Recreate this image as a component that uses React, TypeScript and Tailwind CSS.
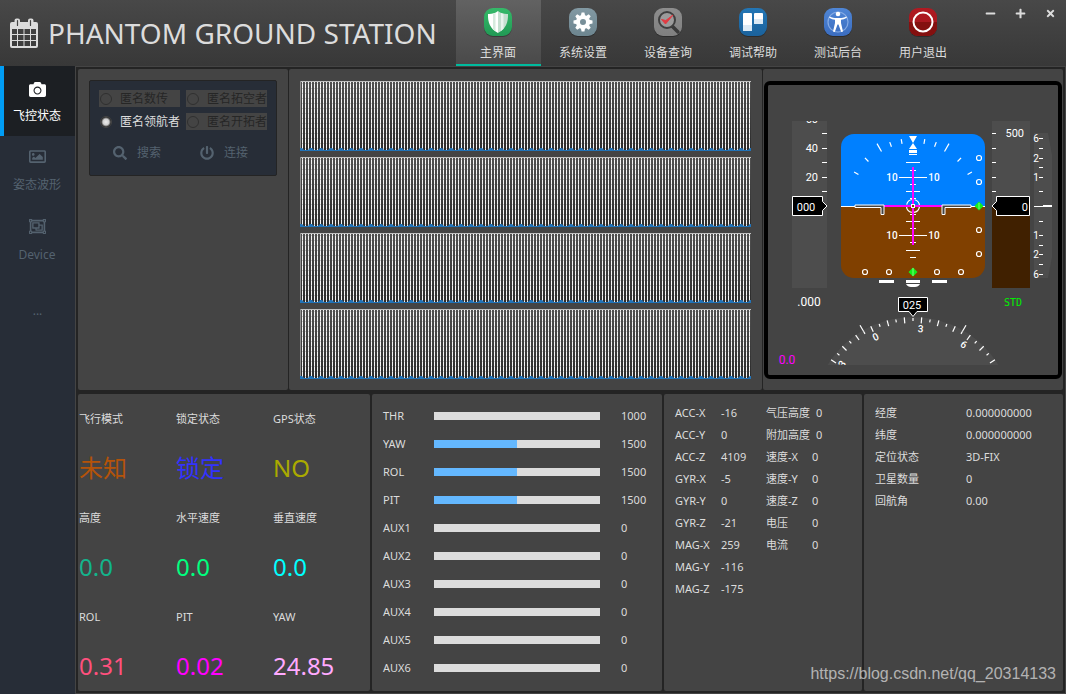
import { useState } from "react";
import type { ReactNode } from "react";
import {
  FaCamera,
  FaMinus,
  FaPlus,
  FaPowerOff,
  FaRegImage,
  FaRegObjectGroup,
  FaSearch,
  FaTimes,
} from "react-icons/fa";

const PANEL = "rounded-xs bg-[#444444]";

const RADIOS = [
  { id: "data", label: "匿名数传", disabled: true },
  { id: "sky", label: "匿名拓空者", disabled: true },
  { id: "navigator", label: "匿名领航者", disabled: false },
  { id: "pioneer", label: "匿名开拓者", disabled: true },
];

const STATUS_ROWS = [
  [
    { label: "飞行模式", value: "未知", color: "text-[#b45309]" },
    { label: "锁定状态", value: "锁定", color: "text-[#3232ff]" },
    { label: "GPS状态", value: "NO", color: "text-[#aaaa00]" },
  ],
  [
    { label: "高度", value: "0.0", color: "text-[#14b48c]" },
    { label: "水平速度", value: "0.0", color: "text-[#00ff7f]" },
    { label: "垂直速度", value: "0.0", color: "text-[#00ffff]" },
  ],
  [
    { label: "ROL", value: "0.31", color: "text-[#ff507d]" },
    { label: "PIT", value: "0.02", color: "text-[#ff00ff]" },
    { label: "YAW", value: "24.85", color: "text-[#ffaaff]" },
  ],
];

const CHANNELS = [
  { name: "THR", value: 1000 },
  { name: "YAW", value: 1500 },
  { name: "ROL", value: 1500 },
  { name: "PIT", value: 1500 },
  { name: "AUX1", value: 0 },
  { name: "AUX2", value: 0 },
  { name: "AUX3", value: 0 },
  { name: "AUX4", value: 0 },
  { name: "AUX5", value: 0 },
  { name: "AUX6", value: 0 },
];

const IMU = [
  ["ACC-X", "-16"],
  ["ACC-Y", "0"],
  ["ACC-Z", "4109"],
  ["GYR-X", "-5"],
  ["GYR-Y", "0"],
  ["GYR-Z", "-21"],
  ["MAG-X", "259"],
  ["MAG-Y", "-116"],
  ["MAG-Z", "-175"],
];

const EXTRA = [
  ["气压高度", "0"],
  ["附加高度", "0"],
  ["速度-X", "0"],
  ["速度-Y", "0"],
  ["速度-Z", "0"],
  ["电压", "0"],
  ["电流", "0"],
];

const GPS = [
  ["经度", "0.000000000"],
  ["纬度", "0.000000000"],
  ["定位状态", "3D-FIX"],
  ["卫星数量", "0"],
  ["回航角", "0.00"],
];

function CalendarIcon() {
  return (
    <svg className="h-[30px] w-7" viewBox="0 0 28 30" fill="none" aria-hidden>
      <path
        fill="#dcdcdc"
        fillRule="evenodd"
        d="M2 4h2.500V2.500a2 2 0 0 1 2-2h1.500a2 2 0 0 1 2 2V4h8V2.500a2 2 0 0 1 2-2h1.500a2 2 0 0 1 2 2V4H26a2 2 0 0 1 2 2v22a2 2 0 0 1-2 2H2a2 2 0 0 1-2-2V6a2 2 0 0 1 2-2zM2 11v5h5v-5zm6 0v5h5.500v-5zm6.500 0v5H20v-5zm6.500 0v5h5v-5zM2 17v5h5v-5zm6 0v5h5.500v-5zm6.500 0v5H20v-5zm6.500 0v5h5v-5zM2 23v5h5v-5zm6 0v5h5.500v-5zm6.500 0v5H20v-5zm6.500 0v5h5v-5z"
      />
      <path d="M7.500 2.500v5M20.500 2.500v5" stroke="#444444" strokeWidth="1.200" strokeLinecap="round" />
    </svg>
  );
}

function AppIcon({ id, from, to, children }: { id: string; from: string; to: string; children: ReactNode }) {
  return (
    <svg className="h-[30px] w-[30px]" viewBox="0 0 30 30" fill="none" aria-hidden>
      <defs>
        <linearGradient id={id} x1="0" y1="0" x2="0" y2="1">
          <stop offset="0" stopColor={from} />
          <stop offset="1" stopColor={to} />
        </linearGradient>
      </defs>
      <rect x="1" y="2" width="28" height="28" rx="9" fill="#000000" opacity="0.300" />
      <rect x="1" y="1" width="28" height="28" rx="9" fill={`url(#${id})`} />
      {children}
    </svg>
  );
}

const NAV_ITEMS = [
  {
    label: "主界面",
    icon: (
      <AppIcon id="nav-home" from="#35b969" to="#219a55">
        <path d="M15 4c3 2.500 6.500 3.200 10 3 .3 8-2 15-10 19z" fill="#c5dfd0" />
        <path d="M15 4C12 6.500 8.500 7.200 5 7c-.3 8 2 15 10 19z" fill="#ffffff" />
        <path d="M10 7v15l2.500 2.300V5.900z" fill="#d6eade" />
        <path d="M18 5.900v18.200l2.500-2.300V7z" fill="#e7f3ec" />
      </AppIcon>
    ),
  },
  {
    label: "系统设置",
    icon: (
      <AppIcon id="nav-settings" from="#8299a3" to="#6d858f">
        <g fill="#ffffff">
          {[0, 45, 90, 135, 180, 225, 270, 315].map((a) => (
            <path key={a} d="M12.800 9l.8-3.500h2.800l.8 3.500z" transform={`rotate(${a} 15 15)`} />
          ))}
        </g>
        <circle cx="15" cy="15" r="5" stroke="#ffffff" strokeWidth="4" />
      </AppIcon>
    ),
  },
  {
    label: "设备查询",
    icon: (
      <AppIcon id="nav-query" from="#8e8e8e" to="#808080">
        <path d="M19 19l6 6" stroke="#3a3a3a" strokeWidth="3.500" strokeLinecap="round" />
        <circle cx="14" cy="13" r="8" fill="#9b9b9b" stroke="#3f3f3f" strokeWidth="2" />
        <path d="M8.500 12.500l4 4.500 7.500-9-7.200 5.500z" fill="#e23b42" stroke="#e23b42" strokeWidth="1" />
      </AppIcon>
    ),
  },
  {
    label: "调试帮助",
    icon: (
      <AppIcon id="nav-help" from="#2376b5" to="#1b629c">
        <rect x="5" y="6" width="9" height="18" rx="1" fill="#ffffff" />
        <rect x="16" y="6" width="9" height="11" rx="1" fill="#ffffff" />
        <path d="M5 18h9v5a1 1 0 0 1-1 1H6a1 1 0 0 1-1-1zM16 12h9v4a1 1 0 0 1-1 1h-7a1 1 0 0 1-1-1z" fill="#dceaf5" />
      </AppIcon>
    ),
  },
  {
    label: "测试后台",
    icon: (
      <AppIcon id="nav-backend" from="#4f86d6" to="#3b6dc0">
        <circle cx="15" cy="15" r="10" stroke="#86abe4" strokeWidth="1.200" />
        <circle cx="15" cy="7" r="2.300" fill="#ffffff" />
        <path
          d="M6.500 9.500c2.500 1.200 5 1.500 6.500 1.500h4c1.500 0 4-.3 6.500-1.500l.3 1.200c-2 1.200-4 1.800-5.800 2.100v3.200l2 8.500-1.800.5-2.700-7.500h-1l-2.700 7.500-1.800-.5 2-8.500v-3.200c-1.800-.3-3.800-.9-5.800-2.100z"
          fill="#ffffff"
        />
      </AppIcon>
    ),
  },
  {
    label: "用户退出",
    icon: (
      <AppIcon id="nav-exit" from="#b01a22" to="#a3151b">
        <path d="M1 15h28v5a9 9 0 0 1-9 9H10a9 9 0 0 1-9-9z" fill="#84100f" />
        <circle cx="15" cy="15" r="9.500" stroke="#ffffff" strokeWidth="2" />
      </AppIcon>
    ),
  },
];

const SIDE_ITEMS = [
  { label: "飞控状态", icon: <FaCamera size={17} /> },
  { label: "姿态波形", icon: <FaRegImage size={17} /> },
  { label: "Device", icon: <FaRegObjectGroup size={17} /> },
];

function WavePlot({ index }: { index: number }) {
  return (
    <svg className="h-[70px] w-full" role="img" aria-label={`波形 ${index + 1}`}>
      <defs>
        <linearGradient id={`bg-${index}`} x1="0" y1="0" x2="0" y2="1">
          <stop offset="0" stopColor="#505050" />
          <stop offset="1" stopColor="#2b2b2b" />
        </linearGradient>
        <pattern id={`grid-${index}`} width="3" height="5" patternUnits="userSpaceOnUse">
          <rect x="2" width="1" height="5" fill="#f5f5f5" />
          <rect x="2" y="2" width="1" height="1" fill="#c8c8c8" />
        </pattern>
        <pattern id={`wave-${index}`} width="10" height="70" patternUnits="userSpaceOnUse">
          <path d="M0 67h2l2 2h4l2-2v3H0z" fill="#2173b8" />
        </pattern>
      </defs>
      <rect width="100%" height="100%" fill={`url(#bg-${index})`} />
      <rect width="100%" height="100%" fill={`url(#grid-${index})`} />
      <rect width="100%" height="1" fill="#c0c0c0" />
      <rect width="1" height="100%" fill="#909090" />
      <rect width="100%" height="100%" fill={`url(#wave-${index})`} />
    </svg>
  );
}

const TAPE_TICKS = [-73, -58, -44, -29, -15];
const VSI_TICKS = [-68, -58, -48, -39, -29, -15, 15, 29, 39, 48, 58, 68];
const VSI_LABELS = [
  { y: 68, text: "6" },
  { y: 48, text: "2" },
  { y: 29, text: "1" },
];
const PITCH_LINES = [
  { y: -44, w: 7 },
  { y: -36, w: 3 },
  { y: -29, w: 14 },
  { y: -22, w: 3 },
  { y: -15, w: 7 },
  { y: -8, w: 3 },
  { y: 8, w: 3 },
  { y: 15, w: 7 },
  { y: 22, w: 3 },
  { y: 29, w: 14 },
  { y: 36, w: 3 },
  { y: 44, w: 7 },
  { y: 51, w: 3 },
];
const BANK_TICKS = [10, 20, 30, 45, 60];
const HEADING = 25;
const COMPASS_TICKS = [-30, -25, -20, -15, -10, -5, 0, 5, 10, 15, 20, 25, 30, 35, 40, 45, 50, 55, 60, 65, 70, 75, 80];

// Primary flight display, origin at the centre of the attitude ball
function FlightDisplay() {
  return (
    <svg
      className="block aspect-square w-full bg-[#444444] font-['Roboto',sans-serif]"
      viewBox="-145 -121 290 290"
      role="img"
      aria-label="飞行仪表"
    >
      <defs>
        <clipPath id="ball">
          <rect x="-72" y="-72" width="144" height="144" rx="13" />
        </clipPath>
        <clipPath id="speed-tape">
          <rect x="-121" y="-85" width="35" height="167" />
        </clipPath>
        <clipPath id="compass">
          <rect x="-90" y="100" width="180" height="59" />
        </clipPath>
      </defs>

      {/* speed tape */}
      <g clipPath="url(#speed-tape)">
        <rect x="-121" y="-85" width="35" height="167" fill="#4d4d4d" />
        {TAPE_TICKS.map((y) => (
          <rect key={y} x="-91" y={y} width="5" height="1" fill="#ffffff" />
        ))}
        <g fill="#ffffff" fontSize="11" textAnchor="end">
          <text x="-95" y="-83">60</text>
          <text x="-95" y="-54">40</text>
          <text x="-95" y="-25">20</text>
        </g>
      </g>
      <path d="M-120.500-9.500h30v5l4.500 4.500-4.500 4.500v5h-30z" fill="#000000" stroke="#ffffff" />
      <text x="-107" y="5" fill="#ffffff" fontSize="11" textAnchor="middle">000</text>
      <text x="-104" y="100" fill="#ffffff" fontSize="12" textAnchor="middle">.000</text>

      {/* attitude ball */}
      <g clipPath="url(#ball)">
        <rect x="-72" y="-73" width="145" height="73" fill="#0080ff" />
        <rect x="-72" y="0" width="145" height="73" fill="#804000" />
        <rect x="-72" y="0" width="145" height="1" fill="#ffffff" />
      </g>
      <g stroke="#ffffff" strokeWidth="1.200">
        {BANK_TICKS.map((a) => (
          <g key={a}>
            <path d={a === 30 ? "M0-63v-9" : "M0-63v-5"} transform={`rotate(${a})`} />
            <path d={a === 30 ? "M0-63v-9" : "M0-63v-5"} transform={`rotate(${-a})`} />
          </g>
        ))}
      </g>
      <path d="M-4-70h8l-4 7zM0-63l4 6h-8zM-4-56h8v3h-8zM-4-52h8v1h-8z" fill="#ffffff" />
      {PITCH_LINES.map(({ y, w }) => (
        <rect key={y} x={-w} y={y} width={w * 2} height="1" fill="#ffffff" />
      ))}
      <g fill="#ffffff" fontSize="10" fontWeight="500" textAnchor="middle">
        <text x="-21" y="-25">10</text>
        <text x="21" y="-25">10</text>
        <text x="-21" y="33">10</text>
        <text x="21" y="33">10</text>
      </g>
      <circle r="6.500" stroke="#ffffff" strokeWidth="1.200" fill="none" strokeDasharray="8.200 2" strokeDashoffset="-1" />
      <rect x="-29" y="-1" width="58" height="2" fill="#ff00ff" />
      <rect x="-1" y="-39" width="2" height="78" fill="#ff00ff" />
      <rect x="-1.500" y="-1.500" width="3" height="3" fill="#804000" stroke="#ffffff" />
      <g fill="#444444" stroke="#ffffff" strokeWidth="1">
        <path d="M-58-1h29v9.500h-3v-7h-26z" />
        <path d="M58-1H29v9.500h3v-7h26z" />
      </g>
      <g fill="none" stroke="#ffffff" strokeWidth="1.200">
        {[-48, -24, 24, 48].map((v) => (
          <g key={v}>
            <circle cx="66" cy={v} r="2.500" />
            <circle cx={v} cy="66" r="2.500" />
          </g>
        ))}
      </g>
      <path d="M66-4.500L70.500 0 66 4.500 61.500 0zM0 61.500l4.500 4.500-4.500 4.500-4.500-4.500z" fill="#12f01c" />
      <path d="M66-3v6M0 62v8" stroke="#7dff7d" strokeWidth="1" />
      <path d="M-34 74h15v3h-15zM19 74h15v3H19zM-7 74H7v3H-7zM-7 78H7c-1 2-3 3-5 3h-4c-2 0-4-1-5-3z" fill="#ffffff" />

      {/* altitude tape */}
      <rect x="79" y="-85" width="38" height="85" fill="#4d4d4d" />
      <rect x="79" y="0" width="38" height="82" fill="#402000" />
      {TAPE_TICKS.map((y) => (
        <rect key={y} x="79" y={y} width="4" height="1" fill="#ffffff" />
      ))}
      <text x="111" y="-69" fill="#ffffff" fontSize="11" textAnchor="end">500</text>
      <path d="M116.500-9.500h-33v5l-4.500 4.500 4.500 4.500v5h33z" fill="#000000" stroke="#ffffff" />
      <text x="115" y="5" fill="#ffffff" fontSize="11" textAnchor="end">0</text>
      <text x="100" y="100" fill="#00f000" fontSize="10" className="font-['DejaVu_Sans_Mono',monospace]" textAnchor="middle">
        STD
      </text>

      {/* vertical speed */}
      <path d="M121-73h14l4 22V51l-4 21h-14z" fill="#4d4d4d" />
      {VSI_TICKS.map((y) => (
        <rect key={y} x="126" y={y} width="4" height="1" fill="#ffffff" />
      ))}
      <g fill="#ffffff" fontSize="10" textAnchor="middle">
        {VSI_LABELS.map(({ y, text }) => (
          <g key={y}>
            <text x="123" y={4 - y}>{text}</text>
            <text x="123" y={4 + y}>{text}</text>
          </g>
        ))}
      </g>
      <path d="M121 0h9v1h-9zM130-1h9v2h-9z" fill="#ffffff" />

      {/* compass rose */}
      <g clipPath="url(#compass)">
        <circle cy="211" r="100" fill="#4d4d4d" />
        <g transform="translate(0 211)" stroke="#ffffff" strokeWidth="1.200">
          {COMPASS_TICKS.map((h) => (
            <path key={h} d={h % 10 === 0 ? "M0-100v6" : "M0-99v3"} transform={`rotate(${h - HEADING})`} />
          ))}
          <path d="M0-99v-7" transform="rotate(30)" />
          <path d="M0-99v-7" transform="rotate(-30)" />
        </g>
        <g transform="translate(0 211)" fill="#ffffff" fontSize="10" fontWeight="500" textAnchor="middle">
          <text y="-85" transform={`rotate(${-30 - HEADING})`}>33</text>
          <text y="-85" transform={`rotate(${0 - HEADING})`}>0</text>
          <text y="-85" transform={`rotate(${30 - HEADING})`}>3</text>
          <text y="-85" transform={`rotate(${60 - HEADING})`}>6</text>
        </g>
      </g>
      <path d="M-14.500 91.500h29v14H4l-4 5-4-5h-10.500z" fill="#000000" stroke="#ffffff" />
      <text x="-1" y="103" fill="#ffffff" fontSize="11" textAnchor="middle">025</text>
      <text x="-126" y="158" fill="#ff00ff" fontSize="12" textAnchor="middle">0.0</text>
    </svg>
  );
}

function ReadoutList({ rows, labelClass }: { rows: string[][]; labelClass: string }) {
  return (
    <dl>
      {rows.map(([label, value]) => (
        <div key={label} className="flex h-[22px] items-center">
          <dt className={`shrink-0 ${labelClass}`}>{label}</dt>
          <dd>{value}</dd>
        </div>
      ))}
    </dl>
  );
}

export default function App() {
  const [page, setPage] = useState("主界面");
  const [side, setSide] = useState("飞控状态");
  const [device, setDevice] = useState("navigator");

  return (
    <div className="relative flex min-h-screen flex-col bg-[#242424] font-['Noto_Sans','Noto_Sans_CJK_SC',sans-serif] text-[11px] leading-4 text-[#dcdcdc]">
      <header className="flex h-[66px] bg-linear-to-b from-[#484848] to-[#383838]">
        <div className="flex w-[456px] shrink-0 items-center gap-[10px] pl-[10px]">
          <CalendarIcon />
          <h1 className="text-[28px] leading-9 whitespace-nowrap">PHANTOM GROUND STATION</h1>
        </div>
        <nav className="flex">
          {NAV_ITEMS.map(({ label, icon }) => (
            <button
              key={label}
              type="button"
              onClick={() => setPage(label)}
              className={`flex w-[85px] flex-col items-center gap-2 border-b-2 pt-[7px] pr-px text-xs ${
                page === label
                  ? "border-[#00bb9e] bg-linear-to-b from-[#626262] to-[#4a4a4a]"
                  : "border-transparent"
              }`}
            >
              {icon}
              {label}
            </button>
          ))}
        </nav>
        <div className="ml-auto flex h-[26px] items-center pr-px">
          <button type="button" aria-label="最小化" className="flex w-[30px] justify-center">
            <FaMinus size={11} />
          </button>
          <button type="button" aria-label="最大化" className="flex w-[30px] justify-center">
            <FaPlus size={11} />
          </button>
          <button type="button" aria-label="关闭" className="flex w-[30px] justify-center">
            <FaTimes size={11} />
          </button>
        </div>
      </header>

      <div className="flex flex-1">
        <aside className="flex w-[75px] shrink-0 flex-col bg-[#272d37] text-xs text-[#54626f]">
          {SIDE_ITEMS.map(({ label, icon }) => (
            <button
              key={label}
              type="button"
              onClick={() => setSide(label)}
              className={`flex h-[70px] flex-col items-center border-l-4 pr-[5px] ${
                side === label
                  ? "gap-[10px] border-[#009df5] bg-[#1c1f23] pt-[15px] text-white"
                  : "gap-3 border-transparent pt-3"
              }`}
            >
              {icon}
              {label}
            </button>
          ))}
          <button type="button" className="h-[70px]" aria-label="更多">
            ...
          </button>
        </aside>

        <main className="flex min-w-0 flex-1 flex-col gap-1 border border-[#444444] bg-[#242424] p-[2px]">
          <div className="grid grid-cols-[210fr_473fr_300fr] gap-px">
            <section className={`${PANEL} px-[11px] pt-[11px]`}>
              <div className="rounded-xs border border-[#242424] bg-[#272d37] px-[9px] pt-[9px] pb-3.5 text-xs">
                <div className="grid grid-cols-2 gap-1.5">
                  {RADIOS.map(({ id, label, disabled }) => (
                    <label
                      key={id}
                      className={`flex h-[17px] items-center gap-2 pl-px leading-[17px] whitespace-nowrap ${
                        disabled ? "bg-[#444444] text-[#262626]" : "text-[#dcdcdc]"
                      }`}
                    >
                      <input
                        type="radio"
                        name="device"
                        value={id}
                        disabled={disabled}
                        checked={device === id}
                        onChange={() => setDevice(id)}
                        className="h-3 w-3 shrink-0 appearance-none rounded-full border border-[#303030] checked:border-[#444444] checked:bg-[radial-gradient(circle,#eeeeee_0,#cfcfcf_3px,#242424_5px)]"
                      />
                      {label}
                    </label>
                  ))}
                </div>
                <div className="mt-[15px] grid grid-cols-2 gap-1.5 text-[#54626f]">
                  <button type="button" className="flex items-center gap-[10px] pl-3.5">
                    <FaSearch size={14} />
                    搜索
                  </button>
                  <button type="button" className="flex items-center gap-[10px] pl-3.5">
                    <FaPowerOff size={14} />
                    连接
                  </button>
                </div>
              </div>
            </section>

            <section className={`${PANEL} flex flex-col justify-between gap-1.5 px-[11px] pt-3 pb-[11px]`}>
              {[0, 1, 2, 3].map((i) => (
                <WavePlot key={i} index={i} />
              ))}
            </section>

            <section className={`${PANEL} px-px pt-3 pb-[11px]`}>
              <div className="overflow-hidden rounded-md border-4 border-black">
                <FlightDisplay />
              </div>
            </section>
          </div>

          <div className="grid flex-1 grid-cols-[292fr_290fr_198fr_199fr] gap-[2px]">
            <section className={`${PANEL} grid grid-rows-3 pl-px`}>
              {STATUS_ROWS.map((row) => (
                <div key={row[0].label} className="grid grid-cols-3">
                  {row.map(({ label, value, color }) => (
                    <div key={label} className="grid grid-rows-2 items-center">
                      <span>{label}</span>
                      <span className={`text-2xl ${color}`}>{value}</span>
                    </div>
                  ))}
                </div>
              ))}
            </section>

            <section className={`${PANEL} pt-2 pl-[11px]`}>
              {CHANNELS.map(({ name, value }) => (
                <div key={name} className="flex h-7 items-center">
                  <span className="w-[51px] shrink-0">{name}</span>
                  <div
                    role="progressbar"
                    aria-label={name}
                    aria-valuemin={1000}
                    aria-valuemax={2000}
                    aria-valuenow={value}
                    className="h-2 flex-1 bg-[#dcdcdc]"
                  >
                    <div
                      className="h-full bg-[#64b8ff]"
                      style={{ width: `${Math.max(0, (value - 1000) / 10)}%` }}
                    />
                  </div>
                  <span className="w-[62px] shrink-0 pl-[21px]">{value}</span>
                </div>
              ))}
            </section>

            <section className={`${PANEL} flex pt-2 pl-[11px]`}>
              <div className="w-[91px] shrink-0">
                <ReadoutList rows={IMU} labelClass="mr-1.5 min-w-10" />
              </div>
              <ReadoutList rows={EXTRA} labelClass="mr-1.5 min-w-10" />
            </section>

            <section className={`${PANEL} pt-2 pl-[11px]`}>
              <ReadoutList rows={GPS} labelClass="w-[91px]" />
            </section>
          </div>
        </main>
      </div>

      <a
        href="https://blog.csdn.net/qq_20314133"
        className="absolute right-[10px] bottom-2 font-['Liberation_Sans',sans-serif] text-base leading-6 text-white/60"
      >
        https://blog.csdn.net/qq_20314133
      </a>
    </div>
  );
}
